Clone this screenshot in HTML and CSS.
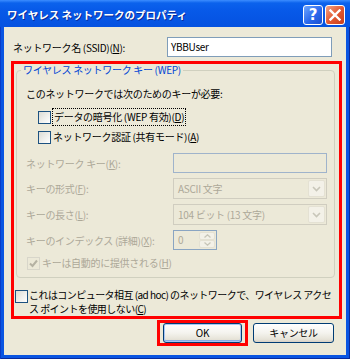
FILE: index.html
```html
<!DOCTYPE html>
<html lang="ja">
<head>
<meta charset="utf-8">
<link rel="stylesheet" href="styles.css">
</head>
<body>
<div class="window">
  <div class="titlebar">
    <span class="title">ワイヤレス ネットワークのプロパティ</span>
    <div class="tb-btns">
      <span class="tb-btn help">?</span>
      <span class="tb-btn close"><svg width="12" height="12" viewBox="0 0 12 12"><path d="M1.5 1.5 L10.5 10.5 M10.5 1.5 L1.5 10.5" stroke="#fff" stroke-width="2.4" stroke-linecap="square"/></svg></span>
    </div>
  </div>
  <div class="client">
    <div class="ssid">
      <span class="lbl">ネットワーク名 (SSID)(<u>N</u>):</span>
      <div class="input">YBBUser</div>
    </div>
    <div class="redbox">
      <div class="group">
        <div class="legend">ワイヤレス ネットワーク キー (WEP)</div>
        <div class="need">このネットワークでは次のためのキーが必要:</div>
        <div class="check c1"><span class="box"></span><span class="focus">データの暗号化 (WEP 有効)(<u>D</u>)</span></div>
        <div class="check c2"><span class="box"></span><span class="ctext">ネットワーク認証 (共有モード)(<u>A</u>)</span></div>
        <div class="field f-key"><span class="flbl">ネットワーク キー(<u>K</u>):</span><div class="dinput"></div></div>
        <div class="field"><span class="flbl">キーの形式(<u>F</u>):</span><div class="combo"><span class="ctxt">ASCII 文字</span><span class="arrow"><svg width="9" height="6" viewBox="0 0 9 6"><path d="M1 1 L4.5 4.5 L8 1" fill="none" stroke="#c8c6b9" stroke-width="1.6"/></svg></span></div></div>
        <div class="field"><span class="flbl">キーの長さ(<u>L</u>):</span><div class="combo"><span class="ctxt">104 ビット (13 文字)</span><span class="arrow"><svg width="9" height="6" viewBox="0 0 9 6"><path d="M1 1 L4.5 4.5 L8 1" fill="none" stroke="#c8c6b9" stroke-width="1.6"/></svg></span></div></div>
        <div class="field"><span class="flbl">キーのインデックス (詳細)(<u>X</u>):</span><div class="spin"><span class="ctxt">0</span><span class="spinbtns"><span class="sb"><svg width="7" height="4" viewBox="0 0 7 4"><path d="M0.5 3.5 L3.5 0.8 L6.5 3.5" fill="none" stroke="#c8c6b9" stroke-width="1.3"/></svg></span><span class="sb"><svg width="7" height="4" viewBox="0 0 7 4"><path d="M0.5 0.5 L3.5 3.2 L6.5 0.5" fill="none" stroke="#c8c6b9" stroke-width="1.3"/></svg></span></span></div></div>
        <div class="auto"><span class="dbox"><svg width="9" height="9" viewBox="0 0 9 9"><path d="M1 4.5 L3.5 7 L8 1.5" fill="none" stroke="#b5b2a3" stroke-width="2"/></svg></span><span class="dtext">キーは自動的に提供される(<u>H</u>)</span></div>
      </div>
      <div class="adhoc"><span class="box"></span><span class="atext"><span class="aline">これはコンピュータ相互 (ad hoc) のネットワークで、ワイヤレス アクセ</span><span class="aline">ス ポイントを使用しない(<u>C</u>)</span></span></div>
    </div>
    <div class="buttons">
      <div class="okwrap"><span class="btn ok">OK</span></div>
      <span class="btn cancel">キャンセル</span>
    </div>
  </div>
</div>
</body>
</html>
```

FILE: styles.css
```css
* { box-sizing: border-box; margin: 0; padding: 0; }
html, body { width: 350px; height: 359px; overflow: hidden; }
body {
  font-family: "Noto Sans CJK JP", "Noto Sans", sans-serif;
  font-size: 10px;
  letter-spacing: -0.3px;
  color: #000;
  background: #fff;
}
u { text-decoration: underline; text-underline-offset: 1px; }

.window {
  width: 350px;
  height: 359px;
  display: flex;
  flex-direction: column;
  background: #0a55e2;
  box-shadow: inset 1px 0 #0a3cc8, inset -1px 0 #0a2a9c, inset 0 -1px #0a2a9c;
}
.titlebar {
  height: 27px;
  flex: none;
  display: flex;
  align-items: flex-start;
  padding: 5px 5px 0 7px;
  background: linear-gradient(#3c8dff 0, #0b62ec 3px, #0759e8 40%, #0552e0 100%);
}
.title {
  flex: 1;
  margin-top: 3px;
  color: #fff;
  font-weight: bold;
  font-size: 10.5px;
  letter-spacing: 0;
  line-height: 14px;
  text-shadow: 1px 1px #0b2a96;
}
.tb-btns { display: flex; gap: 2px; }
.tb-btn {
  width: 20px;
  height: 20px;
  border: 1px solid #fff;
  border-radius: 3px;
  display: flex;
  align-items: center;
  justify-content: center;
  color: #fff;
  font-family: "DejaVu Sans", sans-serif;
  font-weight: bold;
  font-size: 15px;
  line-height: 1;
}
.help { background: linear-gradient(135deg, #6ea6ff, #2a68ec 55%, #1b4fd0); }
.close { background: linear-gradient(135deg, #f3a487, #e35a33 50%, #c83e1c); }

.client {
  flex: 1;
  margin: 0 4px 4px;
  background: #ece9d8;
  padding: 10px 4px 0 7px;
  display: flex;
  flex-direction: column;
}

.ssid {
  display: flex;
  align-items: center;
  height: 20px;
  padding-left: 2px;
  margin-right: 10px;
}
.ssid .lbl { width: 154px; flex: none; }
.input {
  flex: 1;
  height: 20px;
  border: 1px solid #7f9db9;
  background: #fff;
  padding-left: 3px;
  line-height: 18px;
}

.redbox {
  margin-top: 4px;
  border: 3px solid #ff0000;
  padding-bottom: 0;
}
.group {
  margin: 6px 4px 0 2px;
  border: 1px solid #d0d0bf;
  border-radius: 4px;
  padding-bottom: 7px;
}
.legend {
  width: fit-content;
  margin: -7px 0 0 4px;
  padding: 0 2px;
  height: 12px;
  line-height: 12px;
  background: #ece9d8;
  color: #0046d5;
}
.need {
  margin-top: 11px;
  padding-left: 9px;
  line-height: 14px;
}
.check {
  display: flex;
  align-items: center;
  height: 18px;
  padding-left: 21px;
}
.c1 { margin-top: 7px; }
.c2 { margin-top: 2px; }
.box {
  width: 13px;
  height: 13px;
  flex: none;
  border: 1px solid #1c5180;
  background: linear-gradient(135deg, #dcdcd5, #ffffff);
}
.focus {
  margin-left: 1px;
  padding: 1px 1px;
  border: 1px dotted #000;
  line-height: 14px;
}
.ctext { margin-left: 2px; line-height: 14px; }

.field {
  display: flex;
  align-items: center;
  padding-left: 9px;
  margin-top: 5px;
  color: #aca899;
}
.f-key { margin-top: 7px; }
.flbl { width: 147px; flex: none; }
.dinput {
  width: 154px;
  height: 20px;
  border: 1px solid #9fb3cb;
  background: #ece9d8;
}
.combo {
  width: 154px;
  height: 21px;
  border: 1px solid #d0cdc0;
  background: #ece9d8;
  display: flex;
  align-items: center;
  padding: 1px;
}
.ctxt { flex: 1; padding-left: 3px; color: #aca899; line-height: 14px; }
.arrow {
  width: 17px;
  height: 17px;
  flex: none;
  border: 1px solid #e4e1d3;
  border-radius: 2px;
  background: #f3f1e8;
  display: flex;
  align-items: center;
  justify-content: center;
}
.spin {
  width: 44px;
  height: 20px;
  border: 1px solid #8aa5c2;
  background: #ece9d8;
  display: flex;
  align-items: center;
  padding: 1px;
}
.spinbtns {
  width: 16px;
  height: 16px;
  flex: none;
  display: flex;
  flex-direction: column;
}
.sb {
  flex: 1;
  border: 1px solid #e4e1d3;
  border-radius: 2px;
  background: #f3f1e8;
  display: flex;
  align-items: center;
  justify-content: center;
}

.auto {
  margin-top: 6px;
  height: 14px;
  display: flex;
  align-items: center;
  padding-left: 10px;
  color: #aca899;
}
.dbox {
  width: 13px;
  height: 13px;
  flex: none;
  border: 1px solid #d8d6ca;
  display: flex;
  align-items: center;
  justify-content: center;
}
.dtext { margin-left: 2px; line-height: 14px; }

.adhoc {
  margin-top: 10px;
  display: flex;
  align-items: flex-start;
  padding-left: 1px;
}
.adhoc .box { margin-top: 2px; }
.atext { margin-left: 1px; display: flex; flex-direction: column; }
.aline { display: block; height: 14px; line-height: 14px; white-space: nowrap; letter-spacing: -0.55px; }

.buttons {
  margin-top: 1px;
  display: flex;
  justify-content: flex-end;
  align-items: center;
  padding-right: 8px;
}
.okwrap { border: 3px solid #ff0000; padding: 0 3px; }
.btn {
  height: 20px;
  border: 1px solid #003c74;
  border-radius: 3px;
  background: linear-gradient(#ffffff, #f4f3ee 50%, #e6e3d8 85%, #d6d0c5);
  display: flex;
  align-items: center;
  justify-content: center;
  line-height: 14px;
}
.ok { width: 79px; box-shadow: inset 0 0 0 1px #a9c6f3, inset 0 -2px #89ade4; }
.cancel { width: 81px; margin-left: 5px; }
```
